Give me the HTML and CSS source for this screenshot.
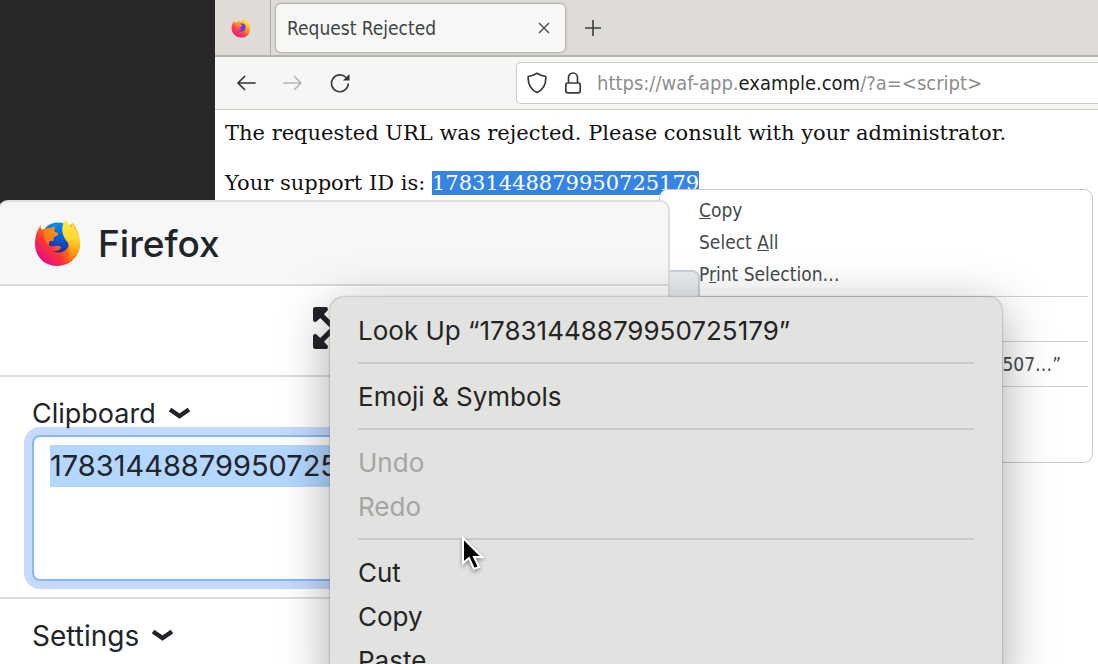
FILE: index.html
```html
<!DOCTYPE html>
<html lang="en">
<head>
<meta charset="utf-8">
<title>Request Rejected</title>
<link rel="stylesheet" href="styles.css">
</head>
<body>
<main class="desktop">
  <section class="browser" aria-label="Browser">
    <div class="tabs">
      <div class="pinned">
        <svg width="20" height="20" viewBox="0 0 47 48" aria-hidden="true">
          <defs>
            <linearGradient id="ember" x1="0.85" y1="0.1" x2="0.25" y2="0.95"><stop offset="0" stop-color="#fff14a"/><stop offset="0.35" stop-color="#ffa52d"/><stop offset="0.65" stop-color="#ff4a49"/><stop offset="1" stop-color="#f31378"/></linearGradient>
          </defs>
          <path fill="url(#ember)" d="M6 8l5 4c2-2 4-3 7-4l1-2 5 3c2-4 5-8 9-8 1 4 6 6 8 11l2-1c6 14 3 36-19 36C6 47-5 27 4 12z"/>
          <path fill="#7139e6" d="M22 13c10-2 14 6 12 13-2 8-14 10-20 3 5 2 9 0 11-3-4 0-6-2-5-4l6-2c-1-3-3-4-4-7z"/>
        </svg>
      </div>
      <div class="tab">
        <span class="tab-title">Request Rejected</span>
        <button class="icon-btn" aria-label="Close tab"><svg width="14" height="14" viewBox="0 0 14 14"><path d="M2 2l10 10M12 2L2 12" fill="none" stroke="#454a4c" stroke-width="1.4"/></svg></button>
      </div>
      <button class="icon-btn new-tab" aria-label="New tab"><svg width="18" height="18" viewBox="0 0 18 18"><path d="M9 1v16M1 9h16" fill="none" stroke="#3b4042" stroke-width="1.6"/></svg></button>
    </div>
    <div class="toolbar">
      <div class="nav">
        <button class="icon-btn" aria-label="Back"><svg width="20" height="18" viewBox="0 0 20 18"><path d="M19 9H2M8.500 2.500L2 9l6.500 6.500" fill="none" stroke="#2e3436" stroke-width="1.7" stroke-linecap="round" stroke-linejoin="round"/></svg></button>
        <button class="icon-btn" aria-label="Forward" disabled><svg width="20" height="18" viewBox="0 0 20 18"><path d="M1 9h17M11.500 2.500L18 9l-6.500 6.500" fill="none" stroke="#b4b6b6" stroke-width="1.7" stroke-linecap="round" stroke-linejoin="round"/></svg></button>
        <button class="icon-btn" aria-label="Reload"><svg width="20" height="20" viewBox="0 0 20 20"><path d="M18.300 11A8.400 8.400 0 1 1 16 4.500" fill="none" stroke="#3b4042" stroke-width="1.700" stroke-linecap="round"/><path d="M19.500 1v6.500H13z" fill="#2e3436"/></svg></button>
      </div>
      <div class="address">
        <svg width="20" height="22" viewBox="0 0 20 22" aria-hidden="true"><path d="M10 1.300C7.500 3 4.500 4 1.200 4.500 0.800 11.500 3.500 17.500 10 20.600 16.500 17.500 19.200 11.500 18.800 4.500 15.500 4 12.500 3 10 1.300z" fill="none" stroke="#353a3c" stroke-width="1.700" stroke-linejoin="round"/></svg>
        <svg width="18" height="22" viewBox="0 0 18 22" aria-hidden="true"><path d="M4.500 11V5.500a4.500 4.500 0 0 1 9 0V11" fill="none" stroke="#353a3c" stroke-width="1.700"/><rect x="1.800" y="11" width="14.400" height="9.800" rx="2" fill="none" stroke="#353a3c" stroke-width="1.700"/></svg>
        <span class="url">https://waf-app.<span class="domain">example.com</span>/?a=&lt;script&gt;</span>
      </div>
    </div>
    <article class="page">
      <p>The requested URL was rejected. Please consult with your administrator.</p>
      <p>Your support ID is: <mark>17831448879950725179</mark></p>
    </article>
  </section>

  <div class="page-menu" role="menu">
    <button role="menuitem"><u>C</u>opy</button>
    <button role="menuitem">Select <u>A</u>ll</button>
    <button role="menuitem">P<u>r</u>int Selection…</button>
    <div class="rule"></div>
    <div class="blank"></div>
    <div class="rule"></div>
    <button class="search" role="menuitem">507…”</button>
    <div class="rule"></div>
  </div>

  <div class="handle"></div>

  <aside class="panel">
    <header class="panel-head">
      <svg width="47" height="48" viewBox="0 0 47 48" aria-hidden="true">
        <defs>
          <linearGradient id="fox" x1="0.85" y1="0.1" x2="0.15" y2="0.8"><stop offset="0" stop-color="#ffbd20"/><stop offset="0.4" stop-color="#ff8a0c"/><stop offset="0.7" stop-color="#ff3434"/><stop offset="1" stop-color="#e8137a"/></linearGradient>
          <linearGradient id="globe" x1="0.6" y1="0" x2="0.4" y2="1"><stop offset="0" stop-color="#0094f5"/><stop offset="0.5" stop-color="#0755cf"/><stop offset="1" stop-color="#34107a"/></linearGradient>
          <linearGradient id="tail" x1="0.5" y1="0" x2="0.4" y2="1"><stop offset="0" stop-color="#fff04a"/><stop offset="0.45" stop-color="#ffd52d"/><stop offset="0.75" stop-color="#ff970b"/><stop offset="1" stop-color="#ff5a1f"/></linearGradient>
        </defs>
        <circle cx="24" cy="21" r="17.500" fill="url(#globe)"/>
        <path fill="url(#fox)" d="M7 5c-1 3 0 4 1 6 4-2 7-2 9-2l4-2-1 5c1 1 3 2 4 2 0 2-1 3-4 4l-1 4c-3-1-5 1-4 4 2 3 6 0 9 1 2 0 4 1 3 2-2 3-5 3-8 3 7 4 14 0 16-6 2-7-2-12-1-19l5-3c5 7 7 14 7 21 0 12-10 22-23 22C10 47 1 37 1 25 1 18 3 12 5 9z"/>
        <path fill="url(#tail)" d="M32 0c1 4 4 6 5 9l2-4c1 5 7 11 7 20 0 11-9 19-19 19 10-5 9-14 7-20-5-6-9-15-2-24z"/>
        <path fill="#ff8a12" d="M10 12c3-3 5-3 7-3l4-2-1 5c1 1 3 2 4 2 0 2-1 3-4 4l-1 4c-3-1-5 1-4 4-4-3-6-8-5-14z" opacity="0.7"/>
      </svg>
      <h1>Firefox</h1>
    </header>
    <div class="panel-tools">
      <button class="icon-btn" aria-label="Fullscreen"><svg width="42" height="42" viewBox="0 32 448 448"><path fill="#212529" d="M448 344v112a24 24 0 0 1-24 24H312c-21.390 0-32.090-25.900-17-41l36.200-36.200L224 295.600 116.770 402.900 153 439c15.090 15.100 4.390 41-17 41H24a24 24 0 0 1-24-24V344c0-21.400 25.890-32.100 41-17l36.190 36.200L184.460 256 77.180 148.700 41 185c-15.100 15.100-41 4.400-41-17V56a24 24 0 0 1 24-24h112c21.390 0 32.090 25.900 17 41l-36.200 36.200L224 216.400l107.230-107.300L295 73c-15.090-15.100-4.390-41 17-41h112a24 24 0 0 1 24 24v112c0 21.400-25.890 32.100-41 17l-36.190-36.200L263.540 256l107.280 107.300L407 327.100c15.100-15.200 41-4.500 41 16.900z"/></svg></button>
    </div>
    <div class="panel-clip">
      <label for="clip">Clipboard <svg width="21" height="14" viewBox="0 0 21 14" aria-hidden="true"><path d="M1 2.500l9.500 6.500L20 2.500" fill="none" stroke="#212529" stroke-width="4.500"/></svg></label>
      <textarea id="clip" spellcheck="false">17831448879950725179</textarea>
    </div>
    <div class="panel-settings">
      <button class="fold">Settings <svg width="21" height="14" viewBox="0 0 21 14" aria-hidden="true"><path d="M1 2.500l9.500 6.500L20 2.500" fill="none" stroke="#212529" stroke-width="4.500"/></svg></button>
    </div>
  </aside>

  <div class="sys-menu" role="menu">
    <button role="menuitem">Look Up “17831448879950725179”</button>
    <div class="rule"></div>
    <button role="menuitem">Emoji &amp; Symbols</button>
    <div class="rule"></div>
    <button role="menuitem" disabled>Undo</button>
    <button role="menuitem" disabled>Redo</button>
    <div class="rule"></div>
    <button role="menuitem">Cut</button>
    <button role="menuitem">Copy</button>
    <button role="menuitem">Paste</button>
  </div>

  <svg class="pointer" width="26" height="40" viewBox="0 0 26 40" aria-hidden="true"><path d="M2 3v25l6-5 5 11 5-2-5-10h8z" fill="#000" stroke="#fff" stroke-width="2"/></svg>
</main>
<script src="select.js"></script>
</body>
</html>
```
FILE: styles.css
```css
* { box-sizing: border-box; }

body {
  margin: 0;
  background: #fff;
}

button {
  border: 0;
  padding: 0;
  background: none;
  font: inherit;
  color: inherit;
  text-align: left;
}

.desktop {
  position: relative;
  height: 100vh;
  overflow: hidden;
  padding-left: 215px;
  background: #282828;
}

.icon-btn { display: flex; }

/* Remote browser window */
.browser {
  display: flex;
  flex-direction: column;
  height: 100%;
  background: #fff;
  font-family: "DejaVu Sans Condensed", "Noto Sans", sans-serif;
  color: #2e3436;
}

.tabs {
  display: flex;
  align-items: center;
  height: 57px;
  background: #dfdcd8;
  border-bottom: 2px solid #b5b3b0;
}

.pinned {
  display: flex;
  align-items: center;
  align-self: stretch;
  width: 56px;
  padding-left: 16px;
  border-right: 1px solid #b0aeab;
}

.tab {
  display: flex;
  align-items: center;
  justify-content: space-between;
  width: 289px;
  height: 48px;
  margin-left: 5px;
  padding: 0 14px 0 11px;
  border-radius: 5px;
  background: #f7f7f5;
  box-shadow: 0 0 3px #77736d;
}

.tab-title { font-size: 19px; color: #3f4446; }

.new-tab { margin-left: 19px; }

.toolbar {
  display: flex;
  align-items: center;
  gap: 166px;
  height: 53px;
  padding-left: 21px;
  background: #f6f6f4;
  border-bottom: 1px solid #cfcac4;
}

.nav { display: flex; align-items: center; gap: 27px; }

.address {
  display: flex;
  flex: 1;
  align-items: center;
  gap: 17px;
  height: 42px;
  padding-left: 10px;
  border: 1px solid #cdc7c2;
  border-right: 0;
  border-radius: 5px 0 0 5px;
  background: #fff;
}

.url { margin-left: -2px; font-size: 20px; color: #8b8e8f; white-space: nowrap; }
.domain { color: #1b1d1e; }

.page {
  padding: 8px 10px;
  font-family: "DejaVu Serif", serif;
  font-size: 21px;
  line-height: 30px;
  color: #111;
  white-space: nowrap;
}

.page p { margin: 0 0 20px; }

.page mark { background: #3584e4; color: #fff; }

/* Context menu of the remote browser */
.page-menu {
  position: absolute;
  left: 659px;
  top: 189px;
  width: 434px;
  height: 274px;
  padding: 4px;
  border: 1px solid #cdc7c2;
  border-radius: 9px;
  background: #fff;
  font-family: "DejaVu Sans Condensed", "Noto Sans", sans-serif;
  font-size: 19px;
  line-height: 32px;
  color: #454a4c;
}

.page-menu button { display: block; width: 100%; padding-left: 35px; }
.page-menu u { text-underline-offset: 1px; text-decoration-skip-ink: none; }
.page-menu .rule { height: 1px; margin: 6px 0; background: #d0d0d0; }
.page-menu .blank { height: 32px; }
.page-menu .search { padding-right: 27px; text-align: right; }

.handle {
  position: absolute;
  left: 660px;
  top: 270px;
  width: 40px;
  height: 60px;
  border: 2px solid #c9d0d9;
  border-radius: 8px;
  background: #e8ebf0;
}

/* Session panel */
.panel {
  position: absolute;
  left: -2px;
  top: 200px;
  bottom: -20px;
  width: 672px;
  border: 2px solid #dedede;
  border-radius: 10px;
  background: #fff;
  overflow: hidden;
  font-family: Inter, sans-serif;
  font-size: 28px;
  color: #212529;
}

.panel-head {
  display: flex;
  align-items: center;
  gap: 17px;
  height: 84px;
  padding-left: 34px;
  border-bottom: 2px solid #dbdbdb;
  background: #f7f7f7;
}

.panel-head h1 { margin: 0; font-size: 37px; font-weight: 500; }

.panel-tools {
  display: flex;
  align-items: center;
  justify-content: center;
  height: 91px;
  padding-bottom: 5px;
  border-bottom: 2px solid #dedede;
}

.panel-clip {
  display: flex;
  flex-direction: column;
  height: 222px;
  padding: 16px 32px;
  border-bottom: 2px solid #dedede;
}

.panel-clip label, .fold {
  display: flex;
  align-items: center;
  gap: 13px;
  line-height: 42px;
}

/* Keeps descenders above the focus ring of the text box */
.panel-clip label { position: relative; z-index: 1; font-size: 27px; }

.panel-clip textarea {
  height: 146px;
  padding: 8px 16px;
  border: 2px solid #86b7fe;
  border-radius: 8px;
  outline: 0;
  box-shadow: 0 0 0 8px #c6dafe;
  background: #fff;
  font: inherit;
  font-size: 29px;
  line-height: 42px;
  color: #212529;
  resize: none;
}

.panel-clip textarea::selection { background: #b3d7ff; color: #212529; }

.panel-settings { padding: 16px 32px; }

/* System context menu */
.sys-menu {
  position: absolute;
  left: 330px;
  top: 297px;
  width: 672px;
  padding: 12px 28px;
  border-radius: 14px;
  background: #e2e2e0;
  box-shadow: 0 0 2px #777, 0 12px 50px rgba(0, 0, 0, 0.35);
  font-family: Inter, sans-serif;
  font-size: 26px;
  line-height: 44px;
  color: #242424;
}

.sys-menu button { display: block; width: 100%; white-space: nowrap; }
.sys-menu button:disabled { color: #a5a5a4; }
.sys-menu .rule { height: 2px; margin: 9px 0 11px; background: #c9c9c8; }

.pointer {
  position: absolute;
  left: 461px;
  top: 535px;
  filter: drop-shadow(0 2px 2px rgba(0, 0, 0, 0.4));
}
```
FILE: select.js
```js
const clip = document.getElementById("clip");
clip.focus({ preventScroll: true });
clip.select();
```
